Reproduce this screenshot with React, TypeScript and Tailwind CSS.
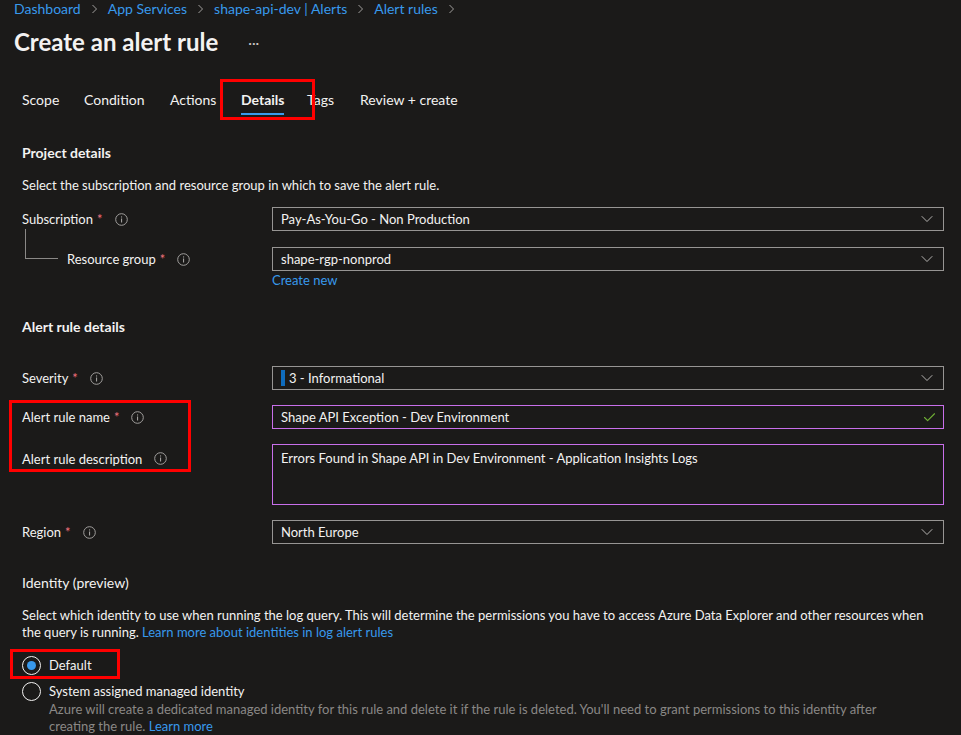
import { ChevronDown, Check } from "lucide-react";

const font = { fontFamily: "Lato, 'Liberation Sans', sans-serif" };

function InfoIcon() {
  return (
    <svg width="13" height="13" viewBox="0 0 13 13" className="shrink-0">
      <circle cx="6.5" cy="6.5" r="5.8" fill="none" stroke="#a19f9d" strokeWidth="1" />
      <rect x="6" y="5.5" width="1.1" height="4" fill="#a19f9d" />
      <rect x="6" y="3.4" width="1.1" height="1.1" fill="#a19f9d" />
    </svg>
  );
}

function Label({ text, required, gap = "ml-[12px]" }: { text: string; required?: boolean; gap?: string }) {
  return (
    <div className="flex items-center text-[13px] text-[#f3f2f1]">
      <span className="pt-[2px]">{text}</span>
      {required ? <span className="ml-[4px] pt-[2px] text-[#f1707b]">*</span> : null}
      <span className={gap}>
        <InfoIcon />
      </span>
    </div>
  );
}

function Dropdown({ value, bar }: { value: string; bar?: boolean }) {
  return (
    <div className="flex h-[24px] flex-1 items-center border border-[#979593] pl-[8px] pr-[6px] text-[13px] text-[#f3f2f1]">
      {bar ? <span className="mr-[4px] h-[16px] w-[4px] bg-[#0f6cbd]" /> : null}
      <span className="flex-1 pt-[2px]">{value}</span>
      <ChevronDown size={20} strokeWidth={1} color="#d2d0ce" />
    </div>
  );
}

function Crumb() {
  return (
    <svg width="7" height="10" viewBox="0 0 7 10" className="mx-[2px]">
      <path d="M1.5 1 L5.5 5 L1.5 9" fill="none" stroke="#a19f9d" strokeWidth="1" />
    </svg>
  );
}

export default function App() {
  return (
    <div className="min-h-[735px] w-[961px] overflow-hidden bg-[#1b1a19] text-[#f3f2f1]" style={font}>
      {/* breadcrumb */}
      <div className="flex h-[17px] items-center gap-[8px] pl-[14px] text-[14px] text-[#3899ec]">
        <span>Dashboard</span>
        <Crumb />
        <span>App Services</span>
        <Crumb />
        <span>shape-api-dev | Alerts</span>
        <Crumb />
        <span>Alert rules</span>
        <Crumb />
      </div>

      {/* title */}
      <div className="mt-[13px] flex h-[24px] items-center pl-[14px]">
        <h1 className="text-[24px] font-bold">Create an alert rule</h1>
        <span className="ml-[30px] text-[14px] text-[#c8c6c4]">···</span>
      </div>

      {/* tabs */}
      <div className="mt-[24px] flex h-[42px] items-center pl-[22px] text-[14px]">
        <div className="w-[62px]">Scope</div>
        <div className="w-[86px]">Condition</div>
        <div className="w-[71px]">Actions</div>
        <div className="relative flex h-full w-[66px] items-center font-bold">
          Details
          <span className="absolute bottom-[5px] left-0 h-[2px] w-[43px] bg-[#3899ec]" />
          <span className="absolute left-[-21px] top-[1px] h-[41px] w-[95px] border-[3px] border-[#ff0000]" />
        </div>
        <div className="w-[53px]">Tags</div>
        <div>Review + create</div>
      </div>

      <div className="pl-[22px] pr-[17px]">
        {/* project details */}
        <div className="mt-[23px] h-[20px] text-[14px] font-bold leading-[20px]">Project details</div>
        <div className="mt-[13px] h-[18px] text-[13px] leading-[18px]">
          Select the subscription and resource group in which to save the alert rule.
        </div>

        <div className="mt-[13px] flex items-center">
          <div className="w-[250px]">
            <Label text="Subscription" required />
          </div>
          <Dropdown value="Pay-As-You-Go - Non Production" />
        </div>

        <div className="mt-[16px] flex items-center">
          <div className="relative w-[250px] pl-[45px]">
            <span className="absolute left-[3px] top-[-19px] h-[30px] w-[33px] border-b border-l border-[#8a8886]" />
            <Label text="Resource group" required />
          </div>
          <Dropdown value="shape-rgp-nonprod" />
        </div>
        <div className="ml-[250px] h-[17px] pt-[1px] text-[13px] leading-[16px] text-[#3899ec]">Create new</div>

        {/* alert rule details */}
        <div className="mt-[29px] h-[20px] text-[14px] font-bold leading-[20px]">Alert rule details</div>

        <div className="mt-[29px] flex items-center">
          <div className="w-[250px]">
            <Label text="Severity" required />
          </div>
          <Dropdown value="3 - Informational" bar />
        </div>

        <div className="relative mt-[15px]">
          <span className="absolute left-[-13px] top-[-5px] h-[72px] w-[182px] border-[3px] border-[#ff0000]" />
          <div className="flex items-center">
            <div className="w-[250px]">
              <Label text="Alert rule name" required />
            </div>
            <div className="flex h-[24px] flex-1 items-center border border-[#c86fea] pl-[8px] pr-[6px] text-[13px]">
              <span className="flex-1 pt-[2px]">Shape API Exception - Dev Environment</span>
              <Check size={15} strokeWidth={1.8} color="#6fae35" />
            </div>
          </div>

          <div className="mt-[15px] flex items-start">
            <div className="w-[250px] pt-[4px]">
              <Label text="Alert rule description" />
            </div>
            <div className="h-[61px] flex-1 border border-[#c86fea] pl-[8px] pt-[4px] text-[13px] leading-[18px]">
              Errors Found in Shape API in Dev Environment - Application Insights Logs
            </div>
          </div>
        </div>

        <div className="mt-[15px] flex items-center">
          <div className="w-[250px]">
            <Label text="Region" required />
          </div>
          <Dropdown value="North Europe" />
        </div>

        {/* identity */}
        <div className="mt-[29px] h-[20px] text-[14px] leading-[20px]">Identity (preview)</div>
        <p className="mt-[14px] text-[13px] leading-[17px]">
          Select which identity to use when running the log query. This will determine the permissions you have to
          access Azure Data Explorer and other resources when the query is running.{" "}
          <span className="text-[#3899ec]">Learn more about identities in log alert rules</span>
        </p>

        <div className="relative mt-[14px] flex h-[20px] items-center">
          <span className="absolute left-[-12px] top-[-6px] h-[30px] w-[110px] border-[3px] border-[#ff0000]" />
          <span className="flex h-[19px] w-[19px] items-center justify-center rounded-full border border-[#f3f2f1]">
            <span className="h-[9px] w-[9px] rounded-full bg-[#3899ec]" />
          </span>
          <span className="ml-[8px] pt-[1px] text-[13px]">Default</span>
        </div>

        <div className="mt-[6px] flex h-[20px] items-center">
          <span className="h-[19px] w-[19px] rounded-full border border-[#f3f2f1]" />
          <span className="ml-[8px] pt-[1px] text-[13px]">System assigned managed identity</span>
        </div>
        <p className="ml-[27px] pr-[30px] text-[13px] leading-[17px] text-[#8a8886]">
          Azure will create a dedicated managed identity for this rule and delete it if the rule is deleted. You'll
          need to grant permissions to this identity after creating the rule.{" "}
          <span className="text-[#3899ec]">Learn more</span>
        </p>
      </div>
    </div>
  );
}
